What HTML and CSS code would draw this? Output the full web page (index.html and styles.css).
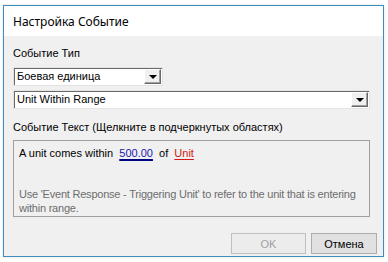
FILE: index.html
```html
<!DOCTYPE html>
<html lang="ru">
<head>
  <meta charset="UTF-8">
  <title>Настройка Событие</title>
  <link rel="stylesheet" href="styles.css">
</head>
<body>
  <div class="window">
    <div class="title">Настройка Событие</div>
    <div class="content">
      <div class="label first">Событие Тип</div>
      <div class="combo short">
        <span class="combo-text">Боевая единица</span>
        <span class="combo-btn"><span class="arrow"></span></span>
      </div>
      <div class="combo wide">
        <span class="combo-text">Unit Within Range</span>
        <span class="combo-btn"><span class="arrow"></span></span>
      </div>
      <div class="label second">Событие Текст (Щелкните в подчеркнутых областях)</div>
      <div class="textbox">
        <div class="line">A unit comes within&nbsp; <span class="link num">500.00</span>&nbsp; of&nbsp; <span class="link unit">Unit</span></div>
        <div class="hint">Use 'Event Response - Triggering Unit' to refer to the unit that is entering within range.</div>
      </div>
      <div class="buttons">
        <div class="btn disabled">OK</div>
        <div class="btn cancel">Отмена</div>
      </div>
    </div>
  </div>
</body>
</html>
```

FILE: styles.css
```css
*{
  margin: 0px;
  padding: 0px;
  box-sizing: border-box;
}
body{
  width: 388px;
  height: 262px;
  background-color: #fff;
  font-family: "Liberation Sans", Arial, sans-serif;
  font-size: 11px;
  color: #000;
  overflow: hidden;
}
.window{
  margin: 5px 0 0 3px;
  width: 381px;
  height: 252px;
  border: 1px solid #3b8cbf;
  display: flex;
  flex-direction: column;
  box-shadow: 0 0 3px rgba(0,0,0,0.12);
}
.title{
  height: 30px;
  background-color: #fff;
  padding-left: 9px;
  display: flex;
  align-items: center;
  font-family: "Noto Sans", "Open Sans", sans-serif;
  font-size: 12px;
}
.content{
  flex: 1;
  background-color: #f0f0f0;
  padding-left: 9px;
  display: flex;
  flex-direction: column;
}
.label{
  height: 13px;
  line-height: 13px;
}
.label.first{
  margin-top: 11px;
}
.label.second{
  margin-top: 12px;
}
.combo{
  height: 19px;
  background-color: #fff;
  border-top: 1px solid #a0a0a0;
  border-left: 1px solid #a0a0a0;
  border-right: 1px solid #fff;
  border-bottom: 1px solid #fff;
  box-shadow: inset 1px 1px 0 #696969;
  display: flex;
  align-items: center;
  outline: 1px solid #e3e3e3;
  outline-offset: -1px;
}
.combo.short{
  margin-top: 7px;
  width: 150px;
}
.combo.wide{
  margin-top: 4px;
  width: 357px;
}
.combo-text{
  flex: 1;
  padding-left: 3px;
  line-height: 13px;
}
.combo-btn{
  width: 17px;
  height: 15px;
  margin-right: 1px;
  background-color: #f0f0f0;
  border-top: 1px solid #fff;
  border-left: 1px solid #fff;
  border-right: 1px solid #696969;
  border-bottom: 1px solid #696969;
  box-shadow: inset -1px -1px 0 #a0a0a0;
  display: flex;
  align-items: center;
  justify-content: center;
}
.arrow{
  width: 0;
  height: 0;
  border-left: 4px solid transparent;
  border-right: 4px solid transparent;
  border-top: 4px solid #000;
  margin-top: 1px;
}
.textbox{
  margin-top: 6px;
  width: 357px;
  height: 77px;
  border: 1px solid #a0a0a0;
  padding: 6px 5px 0 5px;
}
.line{
  line-height: 13px;
}
.link{
  text-decoration: underline;
}
.num{
  color: #1a1ab0;
  text-decoration-color: #000080;
  text-decoration-thickness: 2px;
  text-underline-offset: 2px;
}
.unit{
  color: #d41818;
  text-decoration-color: #d41818;
  text-underline-offset: 2px;
}
.hint{
  margin-top: 27px;
  line-height: 14px;
  color: #6d6d6d;
  width: 345px;
  letter-spacing: -0.22px;
}
.buttons{
  margin-top: 16px;
  display: flex;
  justify-content: flex-end;
  gap: 5px;
  padding-right: 6px;
}
.btn{
  height: 21px;
  display: flex;
  align-items: center;
  justify-content: center;
  font-size: 11px;
}
.btn.disabled{
  width: 75px;
  border: 1px solid #bfbfbf;
  background-color: #ececec;
  color: #a0a0a0;
}
.btn.cancel{
  width: 66px;
  border: 1px solid #adadad;
  background-color: #e1e1e1;
}
```
